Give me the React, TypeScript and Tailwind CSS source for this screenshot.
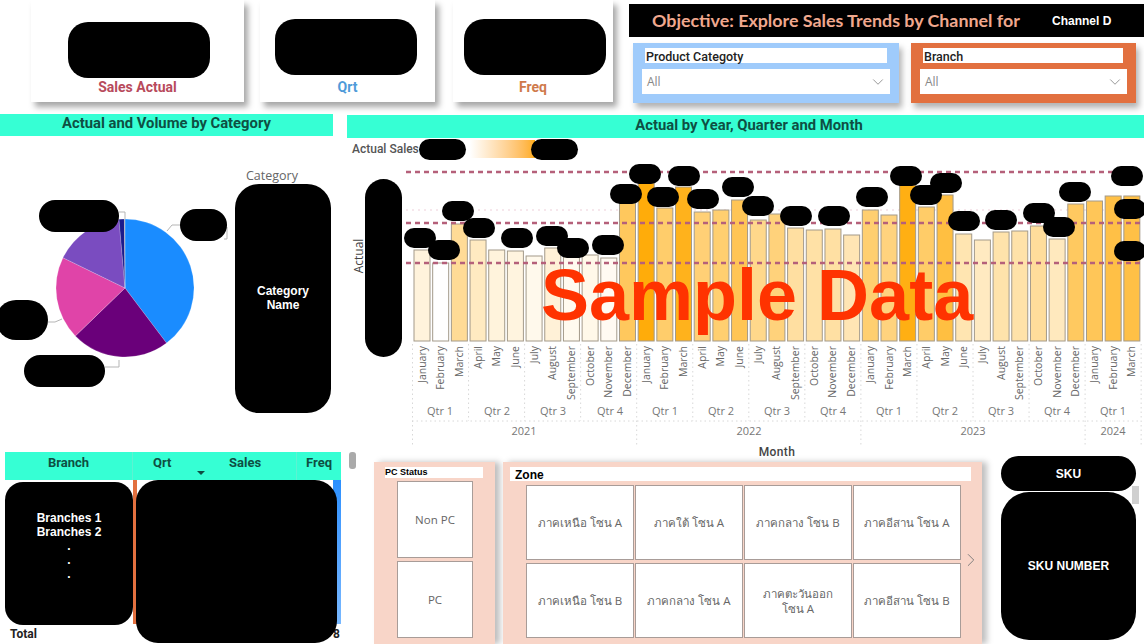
import { ChevronDown, ChevronRight } from "lucide-react";

const MONTHS = ["January", "February", "March", "April", "May", "June", "July", "August", "September", "October", "November", "December"];
const TOPS = [250, 263, 224, 240, 250, 251, 256, 248, 257, 255, 258, 203, 183, 208, 187, 212, 210, 200, 220, 214, 228, 230, 229, 235, 210, 215, 185, 207, 195, 234, 240, 232, 231, 226, 239, 204, 201, 196, 196];
const BAR_PILLS = [
  [420, 238], [444, 250], [458, 211], [479, 228], [517, 238], [552, 236], [573, 248], [608, 245], [626, 194], [645, 174], [663, 197], [684, 176], [703, 199], [738, 187],
  [758, 206], [796, 216], [834, 216], [872, 197], [906, 176], [926, 195], [946, 183], [964, 221], [1001, 220], [1039, 213], [1059, 227], [1075, 192], [1127, 176], [1130, 209], [1130, 251],
];
const QUARTERS = [440, 497, 553, 610, 665, 721, 777, 833, 889, 945, 1001, 1057, 1113];
const YEARS = [
  { label: "2021", x: 524 },
  { label: "2022", x: 749 },
  { label: "2023", x: 973 },
  { label: "2024", x: 1113 },
];
const SLICES = [
  { from: 0, to: 143, color: "#1a8cff" },
  { from: 143, to: 226, color: "#6a007a" },
  { from: 226, to: 296, color: "#e044a8" },
  { from: 296, to: 355, color: "#7a4cc0" },
  { from: 355, to: 359.5, color: "#1c1c8c" },
  { from: 359.5, to: 360, color: "#999999" },
];
const ZONES = ["ภาคเหนือ โซน A", "ภาคใต้ โซน A", "ภาคกลาง โซน B", "ภาคอีสาน โซน A", "ภาคเหนือ โซน B", "ภาคกลาง โซน A", "ภาคตะวันออก โซน A", "ภาคอีสาน โซน B"];

function barColor(top: number) {
  const raw = Math.min(1, Math.max(0, (263 - top) / 80));
  // top end of the scale is only reached by the few tallest bars
  const t = raw < 0.8 ? raw * 0.88 : 0.7 + (raw - 0.8) * 1.5;
  const g = Math.round(255 - t * 83);
  const b = Math.round(255 - t * 245);
  return `rgb(255,${g},${b})`;
}

function slicePath(from: number, to: number) {
  const cx = 125;
  const cy = 288;
  const r = 69;
  const pt = (a: number) => {
    const rad = (a * Math.PI) / 180;
    return `${cx + r * Math.sin(rad)} ${cy - r * Math.cos(rad)}`;
  };
  return `M${cx} ${cy} L${pt(from)} A${r} ${r} 0 ${to - from > 180 ? 1 : 0} 1 ${pt(to)} Z`;
}

function KpiCard({ label, color, width, gap, pad, pill, labelGap }: { label: string; color: string; width: string; gap: string; pad: string; pill: string; labelGap: string }) {
  return (
    <div className={`flex h-[102px] flex-col items-center bg-white shadow-[4px_5px_6px_rgba(0,0,0,0.35)] ${width} ${gap} ${pad}`}>
      <div className={`h-[56px] w-[142px] rounded-[20px] bg-black ${pill}`} />
      <span className={`text-[14px] font-bold leading-[18px] font-['Roboto',sans-serif] ${labelGap}`} style={{ color }}>
        {label}
      </span>
    </div>
  );
}

function Filter({ title, panel, titleBar, box }: { title: string; panel: string; titleBar: string; box: string }) {
  return (
    <div className={`flex h-[60px] flex-col shadow-[3px_5px_6px_rgba(0,0,0,0.3)] ${panel}`}>
      <div className={`mt-[5px] h-[15px] bg-white pl-[1px] text-[12.5px] font-medium leading-[17px] text-[#222] font-['Roboto',sans-serif] ${titleBar}`}>{title}</div>
      <div className={`mt-[6px] flex h-[25px] items-center justify-between bg-white pl-[5px] pr-[3px] text-[12px] text-[#888] font-['Open_Sans',sans-serif] ${box}`}>
        <span>All</span>
        <ChevronDown size={18} strokeWidth={1} color="#777" />
      </div>
    </div>
  );
}

function Band({ children, className }: { children: string; className: string }) {
  return <div className={`h-[22px] bg-[#36ffd4] text-center text-[14.8px] font-bold text-[#0e4f43] font-['Roboto',sans-serif] ${className}`}>{children}</div>;
}

function BarChart() {
  const barX = (i: number) => 414 + i * 18.68;
  return (
    <svg viewBox="347 160 797 296" className="block h-[296px] w-[797px] overflow-visible">
      <line x1="406" x2="1140" y1="210" y2="210" stroke="#f3dfe6" strokeWidth="1.5" strokeDasharray="2 4" />
      {TOPS.map((top, i) => (
        <rect key={i} x={barX(i)} y={top} width="16" height={341 - top} fill={barColor(top)} stroke="#a39a8a" strokeWidth="1" />
      ))}
      {[172, 223, 263].map((y) => (
        <line key={y} x1="406" x2="1140" y1={y} y2={y} stroke="#b5607a" strokeWidth="2.5" strokeDasharray="5 4" />
      ))}
      {Array.from({ length: 14 }).map((_, k) => {
        const x = 412.5 + k * 56.05;
        const isYear = k % 4 === 0 || k === 13;
        return <line key={k} x1={x} x2={x} y1="344" y2={isYear ? 446 : 421} stroke="#d8d8d8" strokeDasharray="1.5 3" />;
      })}
      <line x1="412" x2="1140" y1="421" y2="421" stroke="#d8d8d8" strokeDasharray="1.5 3" />
      {TOPS.map((_, i) => (
        <text key={i} transform={`translate(${barX(i) + 11.5} 346) rotate(-90)`} textAnchor="end" fontSize="10.5" fill="#666" fontFamily="'Open Sans', sans-serif">
          {MONTHS[i % 12]}
        </text>
      ))}
      {QUARTERS.map((x, i) => (
        <text key={i} x={x} y="415" textAnchor="middle" fontSize="11" fill="#777" fontFamily="'Open Sans', sans-serif">
          Qtr {(i % 4) + 1}
        </text>
      ))}
      {YEARS.map((y) => (
        <text key={y.label} x={y.x} y="435" textAnchor="middle" fontSize="11" fill="#777" fontFamily="'Open Sans', sans-serif">
          {y.label}
        </text>
      ))}
      <text x="777" y="456" textAnchor="middle" fontSize="12" fontWeight="500" letterSpacing="0.4" fill="#444" fontFamily="Roboto, sans-serif">
        Month
      </text>
      <text transform="translate(363 256) rotate(-90)" textAnchor="middle" fontSize="12" fill="#444" fontFamily="'Open Sans', sans-serif">
        Actual
      </text>
      <rect x="365" y="179" width="37" height="178" rx="18.5" fill="#000" />
      {BAR_PILLS.map(([x, y], i) => (
        <rect key={i} x={x - 16} y={y - 10} width="32" height="20" rx="10" fill="#000" />
      ))}
    </svg>
  );
}

function PieChart() {
  return (
    <svg viewBox="0 136 235 316" className="block h-[316px] w-[235px] shrink-0 overflow-visible">
      {SLICES.map((s) => (
        <path key={s.color} d={slicePath(s.from, s.to)} fill={s.color} stroke="#ffffff" strokeOpacity="0.35" strokeWidth="0.5" />
      ))}
      <g fill="none" stroke="#b5b5b5" strokeWidth="1">
        <polyline points="167,231 172,225 180,225" />
        <polyline points="227,227 227,239 224,239" />
        <polyline points="119,212 125,212 125,219" />
        <polyline points="48,322 55,322 62,319" />
        <polyline points="105,367 119,367 119,360" />
      </g>
      <rect x="39" y="200" width="80" height="32" rx="16" fill="#000" />
      <rect x="180" y="209" width="47" height="32" rx="16" fill="#000" />
      <rect x="-4" y="300" width="52" height="40" rx="20" fill="#000" />
      <rect x="24" y="355" width="81" height="32" rx="16" fill="#000" />
    </svg>
  );
}

function BranchTable() {
  return (
    <div className="relative ml-[5px] h-[192px] w-[336px] font-['Roboto',sans-serif]">
      <div className="grid h-[28px] grid-cols-[128px_72px_92px_44px] bg-[#36ffd4] text-[13px] font-bold leading-[22px] text-[#0e4f43]">
        <div className="border-r border-[#5cf3d2] text-center">Branch</div>
        <div className="relative pl-[20px]">
          Qrt
          <span className="absolute left-[64px] top-[19px] h-0 w-0 border-x-[4px] border-t-[4px] border-x-transparent border-t-[#0e4f43]" />
        </div>
        <div className="border-r border-[#5cf3d2] pl-[24px]">Sales</div>
        <div className="text-center">Freq</div>
      </div>
      <div className="flex h-[144px] justify-between pl-[128px]">
        <div className="w-[4px] bg-[#e2703f]" />
        <div className="w-[8px] bg-gradient-to-b from-[#2a90ff] to-[#78b8ff]" />
      </div>
      <div className="relative flex h-[20px] items-center pl-[5px] text-[12px] font-bold text-[#222]">
        Total
        <span className="absolute right-[1px]">8</span>
      </div>
      <div className="absolute left-0 top-[30px] flex h-[143px] w-[128px] flex-col items-center rounded-[18px] bg-black pt-[29px] text-[12px] font-bold leading-[14px] text-white font-['Liberation_Sans',sans-serif]">
        <span>Branches 1</span>
        <span>Branches 2</span>
        <span>.</span>
        <span>.</span>
        <span>.</span>
      </div>
      <div className="absolute left-[131px] top-[28px] h-[163px] w-[201px] rounded-[22px] bg-black" />
      <div className="absolute left-[344px] top-0 h-[17px] w-[7px] rounded-[3px] bg-[#aaaaaa]" />
    </div>
  );
}

function SlicerButton({ label, className }: { label: string; className: string }) {
  return (
    <div className={`flex items-center justify-center border border-[#a89c98] bg-white px-[10px] text-center text-[11.5px] leading-[15px] text-[#666] font-['Open_Sans','Noto_Sans',sans-serif] ${className}`}>
      {label}
    </div>
  );
}

export default function App() {
  return (
    <div className="relative flex h-[644px] w-[1144px] flex-col overflow-hidden bg-white">
      <div className="flex h-[114px] shrink-0">
        <KpiCard label="Sales Actual" color="#b84a5c" width="w-[213px]" gap="ml-[31px]" pad="pt-[22px]" pill="ml-[3px]" labelGap="mt-[0px]" />
        <KpiCard label="Qrt" color="#4f9bd9" width="w-[175px]" gap="ml-[16px]" pad="pt-[19px]" pill="-ml-[3px]" labelGap="mt-[3px]" />
        <KpiCard label="Freq" color="#cf7a4c" width="w-[160px]" gap="ml-[18px]" pad="pt-[19px]" pill="ml-[3px]" labelGap="mt-[3px]" />
        <div className="ml-[16px] flex flex-1 flex-col pt-[4px]">
          <div className="flex h-[33px] items-center bg-black pl-[23px]">
            <span className="w-[400px] whitespace-nowrap text-[17.85px] font-bold text-[#f0a88e] font-['Lato',sans-serif]">Objective: Explore Sales Trends by Channel for</span>
            <span className="text-[12px] font-bold text-white font-['Liberation_Sans',sans-serif]">Channel D</span>
          </div>
          <div className="mt-[6px] flex">
            <Filter title="Product Categoty" panel="ml-[4px] w-[266px] bg-[#9fcbfb]" titleBar="ml-[12px] w-[242px]" box="ml-[9px] w-[248px]" />
            <Filter title="Branch" panel="ml-[12px] w-[225px] bg-[#e2703f]" titleBar="ml-[12px] w-[200px]" box="ml-[9px] w-[207px]" />
          </div>
        </div>
      </div>

      <div className="flex min-h-0 flex-1">
        <div className="flex w-[347px] shrink-0 flex-col">
          <Band className="w-[333px] leading-[19px]">Actual and Volume by Category</Band>
          <div className="flex h-[316px] w-[333px]">
            <PieChart />
            <div className="mt-[32px] flex w-[96px] flex-col items-start">
              <span className="ml-[11px] h-[16px] text-[12.5px] leading-[16px] text-[#666] font-['Open_Sans',sans-serif]">Category</span>
              <div className="flex h-[229px] w-[96px] flex-col items-center justify-center rounded-[24px] bg-black pb-[2px] text-center text-[12px] font-bold leading-[14px] text-white font-['Liberation_Sans',sans-serif]">
                <span>Category</span>
                <span>Name</span>
              </div>
            </div>
          </div>
          <BranchTable />
        </div>

        <div className="flex w-[797px] flex-col pt-[1px]">
          <Band className="h-[23px] w-full pl-[7px] leading-[21px]">Actual by Year, Quarter and Month</Band>
          <div className="flex h-[22px] items-center pl-[5px]">
            <span className="w-[67px] whitespace-nowrap text-[12px] font-medium text-[#555] font-['Roboto',sans-serif]">Actual Sales</span>
            <div className="h-[21px] w-[47px] rounded-full bg-black" />
            <div className="ml-[4px] h-[18px] w-[65px] bg-gradient-to-r from-white to-[#ffac0a]" />
            <div className="-ml-[4px] h-[21px] w-[47px] rounded-full bg-black" />
          </div>
          <BarChart />
          <div className="flex h-[188px]">
            <div className="ml-[27px] mt-[6px] flex h-[182px] w-[121px] flex-col bg-[#f8d5c8] shadow-[5px_0_6px_rgba(0,0,0,0.25)]">
              <div className="ml-[11px] mt-[5px] h-[11px] w-[98px] bg-white text-[9px] font-bold leading-[11px] text-black font-['Liberation_Sans',sans-serif]">PC Status</div>
              <SlicerButton label="Non PC" className="ml-[23px] mt-[3px] h-[77px] w-[76px]" />
              <SlicerButton label="PC" className="ml-[23px] mt-[3px] h-[77px] w-[76px]" />
            </div>
            <div className="ml-[8px] mt-[6px] flex h-[182px] w-[479px] flex-col bg-[#f8d5c8] shadow-[5px_0_6px_rgba(0,0,0,0.25)]">
              <div className="ml-[7px] mt-[5px] h-[14px] w-[461px] bg-white pl-[5px] text-[12px] font-bold leading-[16px] text-black font-['Liberation_Sans',sans-serif]">Zone</div>
              <div className="flex items-center">
                <div className="ml-[23px] mt-[4px] grid w-[435px] grid-cols-[108px_108px_108px_108px] grid-rows-[75px_75px] gap-[1px] gap-y-[3px]">
                  {ZONES.map((zone) => (
                    <SlicerButton key={zone} label={zone} className="" />
                  ))}
                </div>
                <ChevronRight size={26} strokeWidth={1} color="#777" className="-ml-[1px]" />
              </div>
            </div>
            <div className="relative ml-[19px] flex w-[135px] flex-col text-[12px] font-bold text-white font-['Liberation_Sans',sans-serif]">
              <div className="flex h-[35px] items-center justify-center rounded-[18px] bg-black">SKU</div>
              <div className="mt-[1px] flex h-[148px] items-center justify-center rounded-[28px] bg-black pb-[1px]">SKU NUMBER</div>
              <div className="absolute left-[131px] top-[30px] h-[18px] w-[7px] bg-[#d0d0d0]" />
            </div>
          </div>
        </div>
      </div>

      <div className="absolute left-[541px] top-[254px] whitespace-nowrap text-[72px] font-bold leading-[82px] text-[#ff3300] font-['Liberation_Sans',sans-serif]">Sample Data</div>
    </div>
  );
}
